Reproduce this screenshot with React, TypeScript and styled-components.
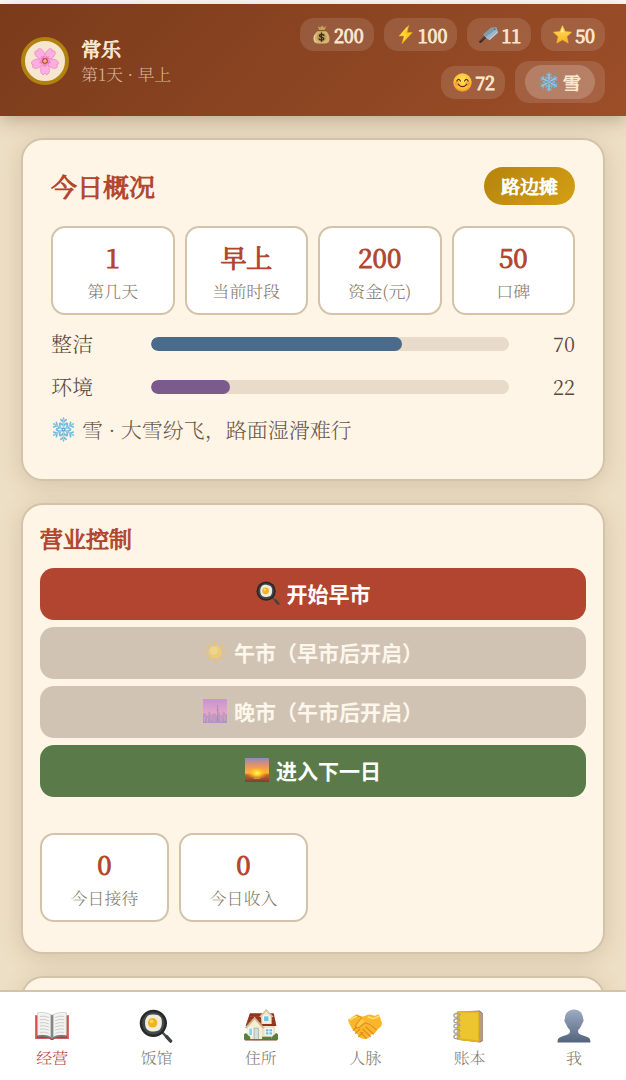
import React from "react";
import styled, { createGlobalStyle, css } from "styled-components";

const serif = `"Noto Serif SC", "Noto Serif CJK SC", "Liberation Serif", "Noto Sans CJK SC", serif`;
const sans = `"Noto Sans CJK SC", "Noto Sans", sans-serif`;

const GlobalStyle = createGlobalStyle`
  *, *::before, *::after { box-sizing: border-box; }
  html { scrollbar-width: none; background: #fff; }
  body { margin: 0; font-family: ${serif}; color: #5d4a3c; }
  h1, h2, p, dl, dd, dt { margin: 0; }
`;

/* Even, monoline emphasis: a regular face thickened by an outline. */
const strong = css`
  font-weight: 400;
  -webkit-text-stroke: 1px currentColor;
`;

const Page = styled.div`
  min-height: 100vh;
  padding-top: 4px;
`;

const Header = styled.header`
  position: relative;
  display: flex;
  align-items: center;
  justify-content: space-between;
  gap: 14px;
  padding: 14px 21px 13px;
  background: linear-gradient(135deg, #7a3b1b 0%, #9c4e28 100%);
  box-shadow: 0 4px 18px rgba(70, 40, 20, 0.3);
  color: #fbe6cf;
`;

const Profile = styled.div`
  display: flex;
  align-items: center;
  gap: 12px;
  white-space: nowrap;
`;

const Avatar = styled.div`
  display: grid;
  place-items: center;
  width: 48px;
  height: 48px;
  border: 4px solid #b1820f;
  border-radius: 50%;
  background: #f6e6d0;
`;

const PlayerName = styled.h1`
  ${strong}
  font-size: 20px;
  line-height: 25px;
`;

const PlayerTime = styled.p`
  font-size: 17px;
  line-height: 25px;
  font-weight: 300;
  color: #dcb59b;
`;

const Resources = styled.div`
  display: flex;
  flex-wrap: wrap;
  align-items: center;
  justify-content: flex-end;
  gap: 10px;
  max-width: 54%;
`;

const Chip = styled.div`
  ${strong}
  display: flex;
  align-items: center;
  gap: 3px;
  height: 33px;
  padding: 0 10px 0 12px;
  border-radius: 14px;
  background: rgba(255, 255, 255, 0.12);
  font-size: 18px;
  white-space: nowrap;
`;

const WeatherChip = styled(Chip)`
  height: 42px;
  padding: 0 10px;
`;

const WeatherBadge = styled.span`
  display: flex;
  align-items: center;
  gap: 4px;
  height: 34px;
  padding: 0 14px;
  border-radius: 17px;
  background: rgba(255, 255, 255, 0.2);
`;

const Main = styled.main`
  display: flex;
  flex-direction: column;
  gap: 22px;
  padding: 22px 21px 112px;
  background: #eddfc5;
`;

const Card = styled.section`
  border: 2px solid #d3c3a8;
  border-radius: 22px;
  background: #fef5e7;
  box-shadow: 0 4px 22px rgba(93, 64, 35, 0.17);
`;

const OverviewCard = styled(Card)`
  display: flex;
  flex-direction: column;
  gap: 14px;
  padding: 27px 28px 35px;
`;

const ControlCard = styled(Card)`
  padding: 19px 17px 30px;
`;

const LogCard = styled(Card)`
  min-height: 120px;
`;

const CardHead = styled.div`
  display: flex;
  align-items: center;
  justify-content: space-between;
  margin-bottom: 7px;
`;

const CardTitle = styled.h2<{ $small?: boolean }>`
  ${strong}
  font-size: ${(p) => (p.$small ? 23 : 26)}px;
  line-height: 30px;
  color: #b2452f;
`;

const RankBadge = styled.span`
  ${strong}
  padding: 0 17px;
  border-radius: 19px;
  background: linear-gradient(135deg, #b5830c, #d4a017);
  color: #fff;
  font-size: 19px;
  line-height: 38px;
`;

const StatGrid = styled.dl`
  display: grid;
  grid-template-columns: repeat(4, 1fr);
  gap: 10px;
`;

const StatBox = styled.div`
  display: flex;
  flex-direction: column-reverse;
  gap: 4px;
  padding: 11px 0 10px;
  border: 2px solid #d3c3a8;
  border-radius: 14px;
  background: #fff;
  text-align: center;
`;

const StatValue = styled.dd`
  ${strong}
  font-size: 26px;
  line-height: 36px;
  color: #b2452f;
`;

const StatLabel = styled.dt`
  font-size: 17px;
  line-height: 24px;
  font-weight: 300;
  color: #85786a;
`;

const Meter = styled.div`
  display: grid;
  grid-template-columns: 86px 1fr 52px;
  align-items: center;
  gap: 14px;
  font-size: 21px;
  line-height: 29px;
  font-weight: 300;
`;

const Track = styled.div`
  height: 14px;
  border-radius: 7px;
  overflow: hidden;
  background: #e8dbc9;
`;

const Fill = styled.div<{ $color: string }>`
  height: 100%;
  border-radius: 7px;
  background: ${(p) => p.$color};
`;

const MeterValue = styled.span`
  font-size: 20px;
  font-weight: 400;
  text-align: right;
`;

const WeatherLine = styled.p`
  display: flex;
  align-items: center;
  gap: 6px;
  font-size: 21px;
  line-height: 29px;
  font-weight: 300;
  color: #6b5848;
`;

const Actions = styled.div`
  display: grid;
  gap: 7px;
  margin: 14px 0 36px;
`;

const ActionButton = styled.button<{ $tone?: string }>`
  display: flex;
  align-items: center;
  justify-content: center;
  gap: 7px;
  height: 52px;
  padding: 0 6px 2px;
  border: 0;
  border-radius: 14px;
  background: ${(p) => p.$tone ?? "#d0c3b4"};
  color: #fff;
  font-family: ${sans};
  font-size: 21px;
  font-weight: 700;
  cursor: pointer;

  &:disabled {
    color: #fdf6ea;
    cursor: default;
  }
  &:disabled svg {
    opacity: 0.6;
  }
`;

const TabBar = styled.nav`
  position: fixed;
  inset: auto 0 0;
  display: grid;
  grid-template-columns: repeat(6, 1fr);
  border-top: 2px solid #d3c3a8;
  background: #fff;
`;

const Tab = styled.a`
  display: flex;
  flex-direction: column;
  align-items: center;
  gap: 3px;
  padding: 17px 0 10px;
  color: #85786a;
  font-size: 16px;
  line-height: 24px;
  font-weight: 300;
  text-decoration: none;

  &[aria-current="page"] {
    color: #b2452f;
  }
`;

type IconProps = { size: number };

const Svg = ({ size, children }: IconProps & { children: React.ReactNode }) => (
  <svg width={size} height={size} viewBox="0 0 32 32" aria-hidden="true">
    {children}
  </svg>
);

const Blossom = ({ size }: IconProps) => (
  <Svg size={size}>
    {[-36, 36, 108, 180, 252].map((a) => (
      <g key={a} transform={`rotate(${a} 16 16)`}>
        <path d="M16 16C12.500 13 11 9 11.800 5C12.300 3 13.700 2 15 2.500L16 4L17 2.500C18.300 2 19.700 3 20.200 5C21 9 19.500 13 16 16Z" fill="#fcaee0" stroke="#ea85c2" strokeWidth=".7" />
        <path d="M16 15V10M16 15L14.300 11M16 15L17.700 11" stroke="#dd6aa8" strokeWidth=".7" />
      </g>
    ))}
    <circle cx="16" cy="16" r="3" fill="#c9485f" />
    <circle cx="16" cy="16" r="1.700" fill="#f3bd62" />
  </Svg>
);

const MoneyBag = ({ size }: IconProps) => (
  <Svg size={size}>
    <path d="M10 2L14 4L17 1L20 4L24 2L21 9H12Z" fill="#c5a15c" />
    <path d="M11 9H22C27 13 30 19 29.500 25C29 29 27 31 23 31H9C5 31 3 29 2.500 25C2 19 6 13 11 9Z" fill="#d6b574" />
    <path d="M5 16C3 20 3 27 7 29" stroke="#f0d9a2" strokeWidth="1.500" fill="none" />
    <path d="M10.500 9.500H22.500" stroke="#8a5c22" strokeWidth="2.200" strokeLinecap="round" />
    <circle cx="16" cy="20.500" r="8" fill="#c09b56" />
    <path d="M20 17.500C19 15.500 12.500 15 12.500 18C12.500 21 20 19.500 20 23C20 26 13 26 12 23.500M16 13.500V27.500" stroke="#3b2a14" strokeWidth="2.200" fill="none" strokeLinecap="round" />
  </Svg>
);

const Bolt = ({ size }: IconProps) => (
  <Svg size={size}>
    <path d="M21.500 .5L5 18.500H13.500L10 31.500L27.500 12.500H18.500Z" fill="#fdc91f" stroke="#fbb313" strokeWidth=".8" strokeLinejoin="round" />
    <path d="M18.500 4.500L9 16.500H16L14 24" fill="none" stroke="#ffe04a" strokeWidth="1.800" />
  </Svg>
);

const Cleaver = ({ size }: IconProps) => (
  <Svg size={size}>
    <path d="M2.500 28L11 19.500" stroke="#3d2a28" strokeWidth="4.400" strokeLinecap="round" />
    <path d="M3 26.500L10 19.500" stroke="#8a4d38" strokeWidth="1.400" />
    <path d="M7.500 15.500L20.500 4.500L29.500 4L32 13L18 25.500C14 24 10 21 7.500 15.500Z" fill="#9db6c9" />
    <path d="M7.500 15.500L20.500 4.500L29.500 4L30 6L11.500 20Z" fill="#7f99ad" />
    <path d="M17 24.500L31.500 11.500" stroke="#c3d8e5" strokeWidth="1.500" />
    <circle cx="26.500" cy="7.500" r="1.100" fill="#44535c" />
  </Svg>
);

const Star = ({ size }: IconProps) => (
  <Svg size={size}>
    <defs>
      <linearGradient id="starFill" x1="0" y1="0" x2="0" y2="1">
        <stop offset="0" stopColor="#ffe06a" />
        <stop offset="1" stopColor="#f9b31c" />
      </linearGradient>
    </defs>
    <path d="M16 1L20.500 10.800L31.500 12L23.300 19.500L25.600 30.500L16 25L6.400 30.500L8.700 19.500L.5 12L11.500 10.800Z" fill="url(#starFill)" stroke="#f9b92c" strokeWidth="1" strokeLinejoin="round" />
    <path d="M16 4L18.500 12H13Z" fill="#fff0a0" />
  </Svg>
);

const Smile = ({ size }: IconProps) => (
  <Svg size={size}>
    <defs>
      <radialGradient id="smileFill" cx=".5" cy=".38" r=".65">
        <stop offset="0" stopColor="#ffe45b" />
        <stop offset=".7" stopColor="#fdbd34" />
        <stop offset="1" stopColor="#ee8b20" />
      </radialGradient>
    </defs>
    <circle cx="16" cy="16" r="15.500" fill="url(#smileFill)" />
    <circle cx="7" cy="18" r="4" fill="#fb7d40" opacity=".55" />
    <circle cx="25" cy="18" r="4" fill="#fb7d40" opacity=".55" />
    <path d="M6.500 13.500Q9.500 8 12.500 13.500M19.500 13.500Q22.500 8 25.500 13.500M9 19Q16 27 23 19" fill="none" stroke="#5a2f10" strokeWidth="2" strokeLinecap="round" />
  </Svg>
);

const Snowflake = ({ size }: IconProps) => (
  <Svg size={size}>
    {[0, 60, 120, 180, 240, 300].map((a) => (
      <g key={a} transform={`rotate(${a} 16 16)`} fill="none" strokeLinecap="round">
        <path d="M16 16V1.500M16 6.500L12.500 3.500M16 6.500L19.500 3.500M16 11L12 8M16 11L20 8" stroke="#74b9da" strokeWidth="2.100" />
        <path d="M16 16V3" stroke="#b6e2f4" strokeWidth=".8" />
      </g>
    ))}
    <circle cx="16" cy="16" r="2.400" fill="#4f9fc9" />
    <circle cx="16" cy="16" r="1.100" fill="#dff4fc" />
  </Svg>
);

const Pan = ({ size }: IconProps) => (
  <Svg size={size}>
    <path d="M21.500 21.500L29.500 30" stroke="#4b4e51" strokeWidth="2.200" strokeLinecap="round" />
    <path d="M26 26L29.800 30.200" stroke="#404346" strokeWidth="3.200" strokeLinecap="round" />
    <circle cx="13.500" cy="13.500" r="12.800" fill="#26292b" />
    <circle cx="13.500" cy="13.500" r="10.400" fill="#45494b" />
    <path d="M7 8C9 4.500 13 5 16 5.500C20 6 22 9 21.500 13C21.500 17 20 21 15.500 21C11 22 6.500 20 6 16C5.500 13 5.500 10 7 8Z" fill="#f0eddc" />
    <circle cx="12.800" cy="13" r="4.500" fill="#f3b31b" />
    <circle cx="11.800" cy="11.800" r="1.700" fill="#ffd957" />
  </Svg>
);

const Sun = ({ size }: IconProps) => (
  <Svg size={size}>
    {[0, 45, 90, 135, 180, 225, 270, 315].map((a) => (
      <path key={a} d="M16 0L17.500 5.500H14.500Z" fill="#ffc23c" stroke="#ffc23c" strokeWidth=".6" transform={`rotate(${a} 16 16)`} />
    ))}
    <circle cx="16" cy="16" r="9" fill="#ffcf4d" />
    <circle cx="14.500" cy="14" r="5.500" fill="#ffe27a" />
  </Svg>
);

const Dusk = ({ size }: IconProps) => (
  <Svg size={size}>
    <defs>
      <linearGradient id="duskSky" x1="0" y1="0" x2="0" y2="1">
        <stop offset="0" stopColor="#c074ea" />
        <stop offset=".6" stopColor="#f397d6" />
        <stop offset="1" stopColor="#ab79d6" />
      </linearGradient>
    </defs>
    <rect width="32" height="32" fill="url(#duskSky)" />
    <path d="M0 19H4V22H7V17H10V21H13V19H17V22H20V18H23V22H26V17H29V20H32V32H0Z" fill="#9b6fc0" opacity=".6" />
    <path d="M19.500 8V30M18 15H21" stroke="#8a66b0" strokeWidth="1.200" />
    <path d="M2 24V30M6 25V31M11 23V29M15 25V31M24 24V30M29 23V29" stroke="#d79ade" strokeWidth="1" />
  </Svg>
);

const Sunrise = ({ size }: IconProps) => (
  <Svg size={size}>
    <defs>
      <linearGradient id="sunriseSky" x1="0" y1="0" x2="0" y2="1">
        <stop offset="0" stopColor="#9388b8" />
        <stop offset=".35" stopColor="#ee9460" />
        <stop offset=".62" stopColor="#fdb72c" />
        <stop offset=".7" stopColor="#c9662c" />
        <stop offset="1" stopColor="#7a3f31" />
      </linearGradient>
      <radialGradient id="sunriseGlow">
        <stop offset="0" stopColor="#fff47c" />
        <stop offset=".35" stopColor="#ffd227" />
        <stop offset="1" stopColor="#ff9b20" stopOpacity="0" />
      </radialGradient>
    </defs>
    <rect width="32" height="32" fill="url(#sunriseSky)" />
    <ellipse cx="16" cy="20" rx="14" ry="9" fill="url(#sunriseGlow)" />
    <path d="M12 27H20" stroke="#f9ac35" strokeWidth="1" />
  </Svg>
);

const Book = ({ size }: IconProps) => (
  <Svg size={size}>
    <path d="M0 6H32V28H18.500Q16 30.500 13.500 28H0Z" fill="#bb3034" />
    <path d="M0 6H1.500V28H0ZM30.500 6H32V28H30.500Z" fill="#e06a65" />
    <path d="M2.500 3.500Q11 2.500 16 6Q21 2.500 29.500 3.500V25Q21 23.500 16 27Q11 23.500 2.500 25Z" fill="#f3f3f1" stroke="#c9c9c6" strokeWidth=".7" />
    <path d="M2.500 25Q11 23.500 16 27Q21 23.500 29.500 25V26.500Q21 25 16 28.500Q11 25 2.500 26.500Z" fill="#777" />
    <path d="M14.700 5V26L16 27L17.300 26V5L16 6Z" fill="#85888a" />
    <path d="M4.500 7Q9 6 13 8M4.500 10Q9 9 13 11M4.500 13Q9 12 13 14M4.500 16Q9 15 13 17M4.500 19Q9 18 13 20M4.500 22Q9 21 13 23M19 8Q23 6 27.500 7M19 11Q23 9 27.500 10M19 14Q23 12 27.500 13M19 17Q23 15 27.500 16M19 20Q23 18 27.500 19M19 23Q23 21 27.500 22" fill="none" stroke="#c4c4c4" strokeWidth=".8" />
  </Svg>
);

const House = ({ size }: IconProps) => (
  <Svg size={size}>
    <path d="M3 15H29V29H3Z" fill="#efe2bd" />
    <path d="M5.500 4H28L30.500 16H1.500Z" fill="#8e3420" />
    <path d="M5 7H28M4 10H29M3 13H30" stroke="#a8472d" strokeWidth=".7" />
    <path d="M16 7L21 1.500L26 7V14H16.500Z" fill="#f2e8cd" />
    <path d="M15 7.500L21 1L27 7.500" fill="none" stroke="#d8c7a1" strokeWidth="1.600" />
    <rect x="18.500" y="6.500" width="5" height="5.500" fill="#6fc4e2" stroke="#fff" strokeWidth=".8" />
    <path d="M3 17L10 9L17 17V29H3Z" fill="#f6edd5" />
    <path d="M1.500 18L10 8.500L18.500 18" fill="none" stroke="#ccb68d" strokeWidth="1.700" />
    <rect x="4.500" y="18" width="3.500" height="7" fill="#8fd1e6" stroke="#fff" strokeWidth=".7" />
    <rect x="9.500" y="18" width="4" height="11" fill="#d0e1df" stroke="#a8b0a4" strokeWidth=".8" />
    <rect x="20" y="18.500" width="7" height="6" fill="#61c1e2" stroke="#fff" strokeWidth="1" />
    <path d="M23.500 18.500V24.500M20 21.500H27" stroke="#fff" strokeWidth=".8" />
    <path d="M0 24Q2 21 4 25Q6 25 6 29H0ZM26 29Q26 25 29 24Q30 21 32 24V29ZM17 26H26V29H17Z" fill="#57813c" />
    <path d="M1 29H31" stroke="#9a5434" strokeWidth="1.400" />
  </Svg>
);

const Handshake = ({ size }: IconProps) => (
  <Svg size={size}>
    <path d="M0 10L8 5C10 6 12 7.500 14 7L19 5.500C22 4.500 24 7 26 6L29 5L32 13C32 17 29 18 27 20C26 23 24 24 22 24C20 27 18 29 15 28C12 28 10 26 9 24L5 20C3 17 1 14 0 10Z" fill="#fdb62c" />
    <path d="M8 6L13 8L8 14C6 17 8 19 11 17L16 13C20 13 24 17 27 20" fill="#ffc944" stroke="#e0921f" strokeWidth="1.100" strokeLinejoin="round" />
    <path d="M17 17L24 23.500M14 19L21 26M12 22L17 27.500M5 20L8 17M7 23L11 19M10 26L14 22" fill="none" stroke="#dd8a1b" strokeWidth="1.100" strokeLinecap="round" />
    <path d="M2 10L8 7M19 7.500L24 9L29 7" stroke="#ffe279" strokeWidth="1.300" fill="none" strokeLinecap="round" />
  </Svg>
);

const Ledger = ({ size }: IconProps) => (
  <Svg size={size}>
    <path d="M5 2.500L26 1.500L29 4V30L26.500 31.500L5 29Z" fill="#9c7555" />
    <path d="M26 2.500L28.500 4.500V29.500L26 31Z" fill="#b79a80" />
    <path d="M4.500 2H25Q26 2 26 3.500V31.500L4.500 29Z" fill="#dfb41f" />
    <path d="M7.500 3.500H24.500V29.500L7.500 27.500Z" fill="#ecc530" />
    {[6, 11, 16, 21, 26].map((y) => (
      <path key={y} d={`M8 ${y}C6 ${y - 3} 1.500 ${y - 2} 1.800 ${y + 0.5}C2 ${y + 2.5} 5 ${y + 2} 6 ${y + 1}`} fill="none" stroke="#a5a39b" strokeWidth="1.300" />
    ))}
  </Svg>
);

const Person = ({ size }: IconProps) => (
  <Svg size={size}>
    <defs>
      <linearGradient id="personFill" x1="0" y1="0" x2="0" y2="1">
        <stop offset="0" stopColor="#9dacc3" />
        <stop offset="1" stopColor="#53637d" />
      </linearGradient>
    </defs>
    <path d="M16 .5C21 .5 24.500 4 24.500 9C25.500 9.500 25 13 23.500 14C22.500 17 21 18.500 20 19.500C19.500 22 20 23 22 24L28 26C31 27 31.500 29 31.500 31.500H.5C.5 29 1 27 4 26L10 24C12 23 12.500 22 12 19.500C11 18.500 9.500 17 8.500 14C7 13 6.500 9.500 7.500 9C7.500 4 11 .5 16 .5Z" fill="url(#personFill)" />
  </Svg>
);

const resources = [
  { icon: MoneyBag, label: "资金", value: 200 },
  { icon: Bolt, label: "体力", value: 100 },
  { icon: Cleaver, label: "厨艺", value: 11 },
  { icon: Star, label: "口碑", value: 50 },
  { icon: Smile, label: "心情", value: 72 },
];

const overview = [
  { label: "第几天", value: "1" },
  { label: "当前时段", value: "早上" },
  { label: "资金(元)", value: "200" },
  { label: "口碑", value: "50" },
];

const today = [
  { label: "今日接待", value: "0" },
  { label: "今日收入", value: "0" },
];

const meters = [
  { label: "整洁", value: 70, color: "#4a6b8c" },
  { label: "环境", value: 22, color: "#7b5a8c" },
];

const tabs = [
  { icon: Book, label: "经营" },
  { icon: Pan, label: "饭馆" },
  { icon: House, label: "住所" },
  { icon: Handshake, label: "人脉" },
  { icon: Ledger, label: "账本" },
  { icon: Person, label: "我" },
];

const Stats = ({ items }: { items: { label: string; value: string }[] }) => (
  <StatGrid>
    {items.map((s) => (
      <StatBox key={s.label}>
        <StatLabel>{s.label}</StatLabel>
        <StatValue>{s.value}</StatValue>
      </StatBox>
    ))}
  </StatGrid>
);

export default function App() {
  return (
    <>
      <GlobalStyle />
      <Page>
        <Header>
          <Profile>
            <Avatar>
              <Blossom size={32} />
            </Avatar>
            <div>
              <PlayerName>常乐</PlayerName>
              <PlayerTime>第1天 · 早上</PlayerTime>
            </div>
          </Profile>
          <Resources>
            {resources.map(({ icon: Icon, label, value }) => (
              <Chip key={label}>
                <Icon size={19} />
                {value}
              </Chip>
            ))}
            <WeatherChip>
              <WeatherBadge>
                <Snowflake size={20} />雪
              </WeatherBadge>
            </WeatherChip>
          </Resources>
        </Header>

        <Main>
          <OverviewCard>
            <CardHead>
              <CardTitle>今日概况</CardTitle>
              <RankBadge>路边摊</RankBadge>
            </CardHead>
            <Stats items={overview} />
            {meters.map((m) => (
              <Meter key={m.label}>
                <span>{m.label}</span>
                <Track>
                  <Fill $color={m.color} style={{ width: `${m.value}%` }} />
                </Track>
                <MeterValue>{m.value}</MeterValue>
              </Meter>
            ))}
            <WeatherLine>
              <Snowflake size={25} />雪 · 大雪纷飞，路面湿滑难行
            </WeatherLine>
          </OverviewCard>

          <ControlCard>
            <CardTitle $small>营业控制</CardTitle>
            <Actions>
              <ActionButton type="button" $tone="#b2452f">
                <Pan size={24} />
                开始早市
              </ActionButton>
              <ActionButton type="button" disabled>
                <Sun size={24} />
                午市（早市后开启）
              </ActionButton>
              <ActionButton type="button" disabled>
                <Dusk size={24} />
                晚市（午市后开启）
              </ActionButton>
              <ActionButton type="button" $tone="#5a7b49">
                <Sunrise size={24} />
                进入下一日
              </ActionButton>
            </Actions>
            <Stats items={today} />
          </ControlCard>

          <LogCard />
        </Main>

        <TabBar>
          {tabs.map(({ icon: Icon, label }, i) => (
            <Tab key={label} href="#" aria-current={i === 0 ? "page" : undefined}>
              <Icon size={34} />
              {label}
            </Tab>
          ))}
        </TabBar>
      </Page>
    </>
  );
}
